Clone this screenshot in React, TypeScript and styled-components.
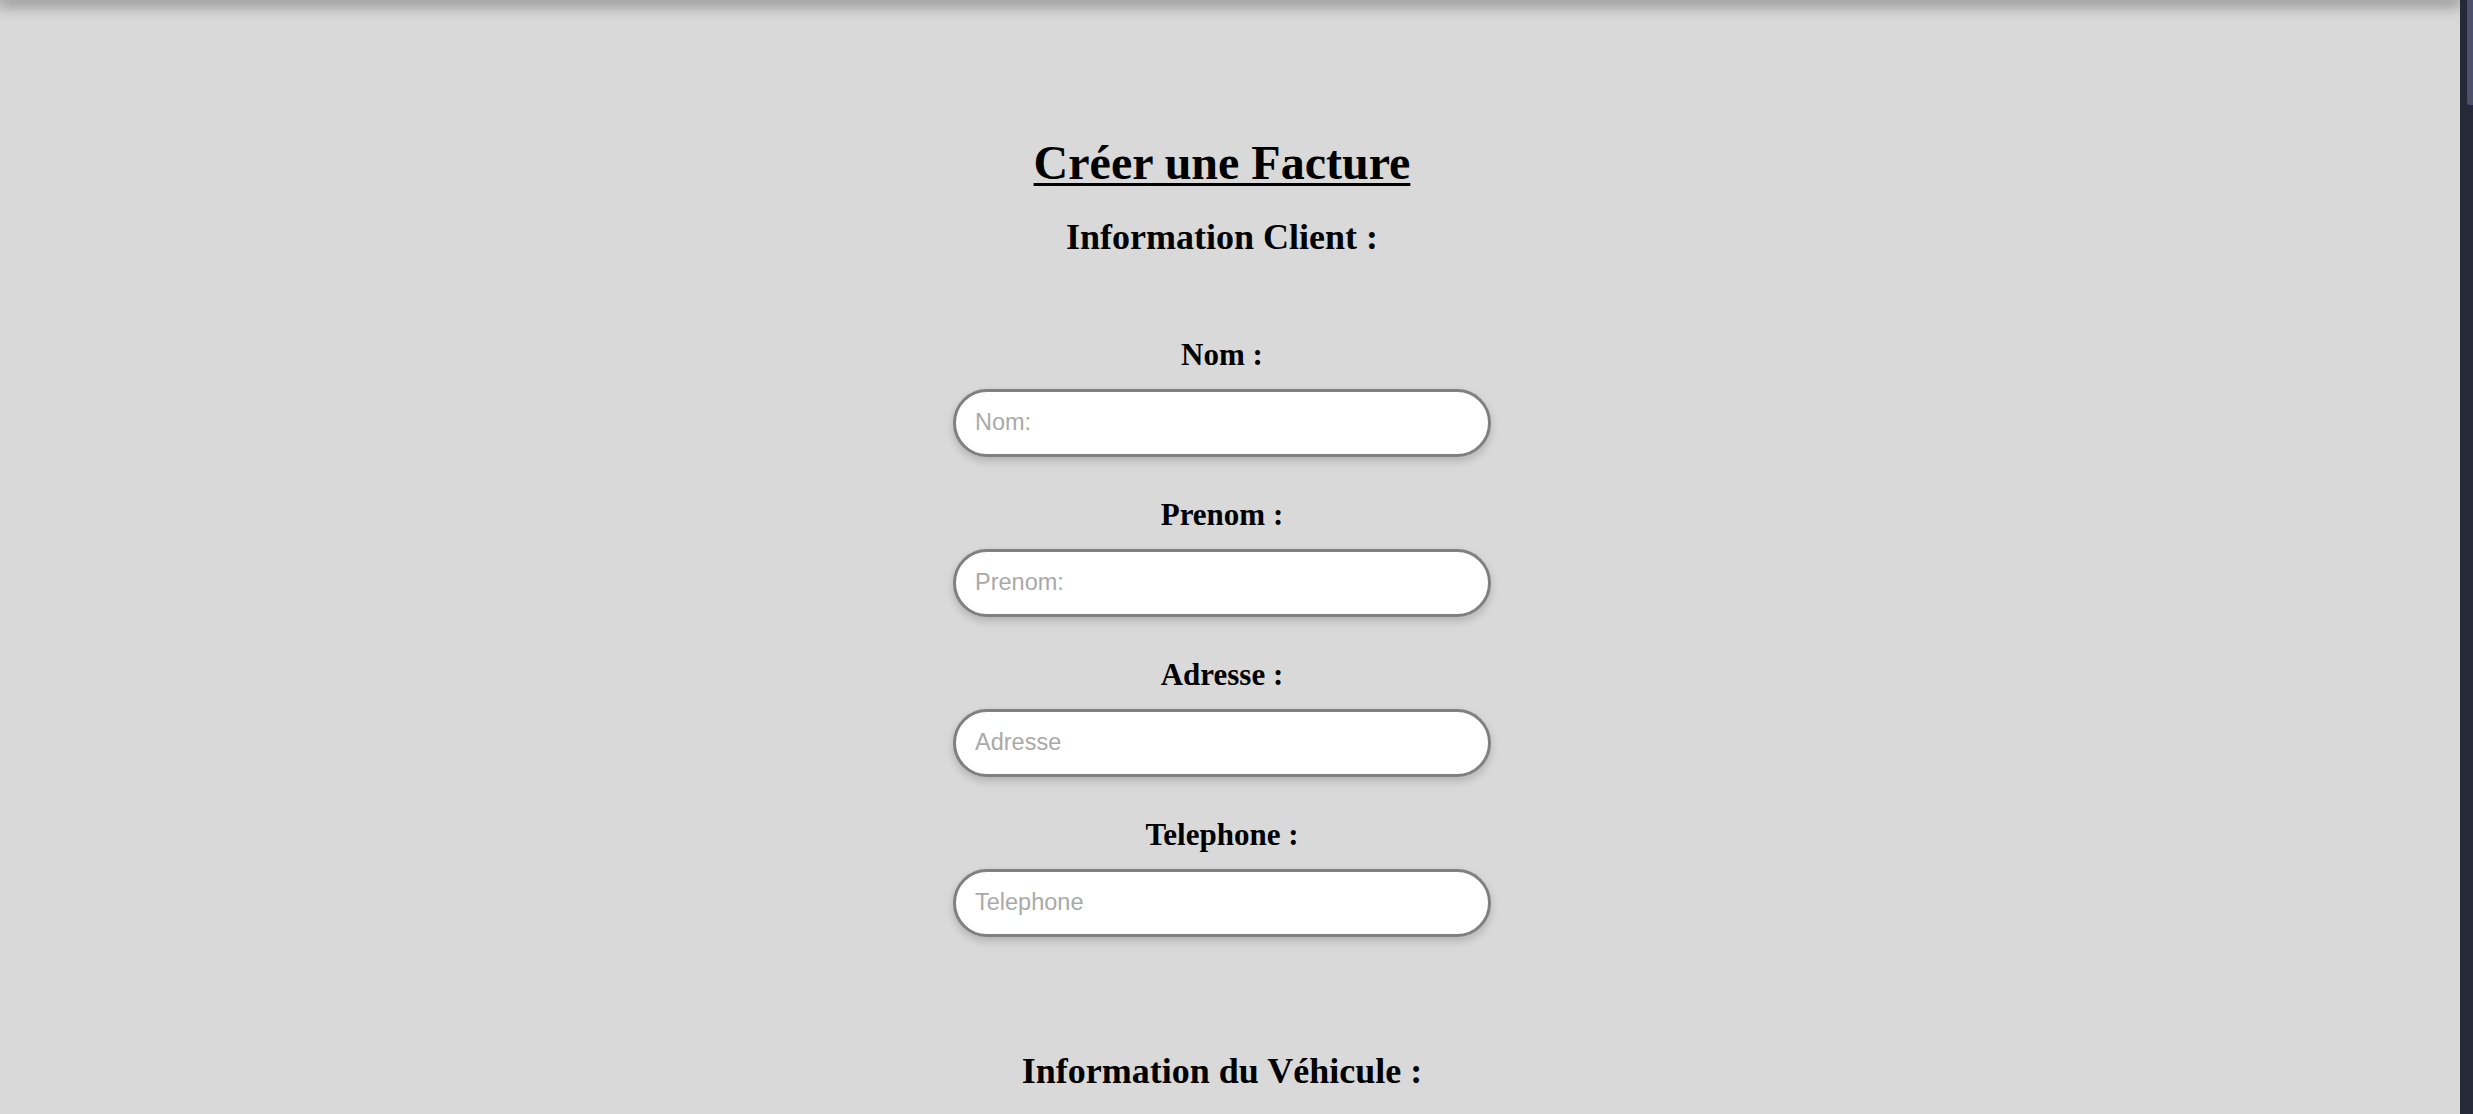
import React from "react";
import styled, { createGlobalStyle } from "styled-components";

const GlobalStyle = createGlobalStyle`
  html, body {
    margin: 0;
    padding: 0;
    height: 100%;
    overflow: hidden;
    background: #d9d9d9;
  }
  #root {
    height: 100%;
  }
`;

const Screen = styled.div`
  display: flex;
  height: 100vh;
  width: 100vw;
  overflow: hidden;
  background: #d9d9d9;
`;

const Main = styled.main`
  flex: 1;
  display: flex;
  flex-direction: column;
  overflow: hidden;
  position: relative;
`;

const TopShadow = styled.div`
  height: 0;
  width: 100%;
  flex-shrink: 0;
  box-shadow: 0 0 16px 3px rgba(0, 0, 0, 0.72);
  position: relative;
  z-index: 2;
`;

const Form = styled.form`
  display: flex;
  flex-direction: column;
  align-items: center;
  padding: 134.6px 16px 0 0;
  font-family: "Liberation Serif", "Times New Roman", serif;
  color: #000;
`;

const Title = styled.h1`
  margin: 0;
  font-size: 48px;
  line-height: 55px;
  font-weight: 700;
  text-decoration: underline;
  text-decoration-thickness: 2.5px;
  text-underline-offset: 4px;
`;

const SectionTitle = styled.h2<{ $top: number }>`
  margin: ${(p) => p.$top}px 0 0;
  font-size: 36px;
  line-height: 41px;
  font-weight: 700;
`;

const Fields = styled.div`
  display: flex;
  flex-direction: column;
  align-items: center;
  gap: 41px;
  margin-top: 80px;
`;

const Field = styled.div`
  display: flex;
  flex-direction: column;
  align-items: center;
  gap: 17px;
`;

const Label = styled.label`
  font-size: 31px;
  line-height: 34px;
  font-weight: 700;
`;

const Input = styled.input`
  box-sizing: border-box;
  width: 538px;
  height: 68px;
  border: 3px solid #808080;
  border-radius: 34px;
  background: #fff;
  padding: 0 19px;
  font-family: "Liberation Sans", Arial, sans-serif;
  font-size: 23.5px;
  color: #000;
  outline: none;
  box-shadow: 0 4px 9px rgba(0, 0, 0, 0.18);

  &::placeholder {
    color: #a9a9a9;
  }
`;

const ScrollRail = styled.div`
  width: 13px;
  flex-shrink: 0;
  background: #262a38;
  display: flex;
  justify-content: flex-end;
  align-items: flex-start;
`;

const ScrollThumb = styled.div`
  width: 6px;
  height: 105px;
  background: #4b5069;
  border-radius: 0 0 0 3px;
`;

const clientFields = [
  { id: "nom", label: "Nom :", placeholder: "Nom:" },
  { id: "prenom", label: "Prenom :", placeholder: "Prenom:" },
  { id: "adresse", label: "Adresse :", placeholder: "Adresse" },
  { id: "telephone", label: "Telephone :", placeholder: "Telephone" },
];

export default function App() {
  return (
    <>
      <GlobalStyle />
      <Screen>
        <Main>
          <TopShadow />
          <Form onSubmit={(e) => e.preventDefault()}>
            <Title>Créer une Facture</Title>
            <SectionTitle $top={27}>Information Client :</SectionTitle>
            <Fields>
              {clientFields.map((f) => (
                <Field key={f.id}>
                  <Label htmlFor={f.id}>{f.label}</Label>
                  <Input id={f.id} type="text" placeholder={f.placeholder} />
                </Field>
              ))}
            </Fields>
            <SectionTitle $top={114.5}>Information du Véhicule :</SectionTitle>
          </Form>
        </Main>
        <ScrollRail>
          <ScrollThumb />
        </ScrollRail>
      </Screen>
    </>
  );
}
